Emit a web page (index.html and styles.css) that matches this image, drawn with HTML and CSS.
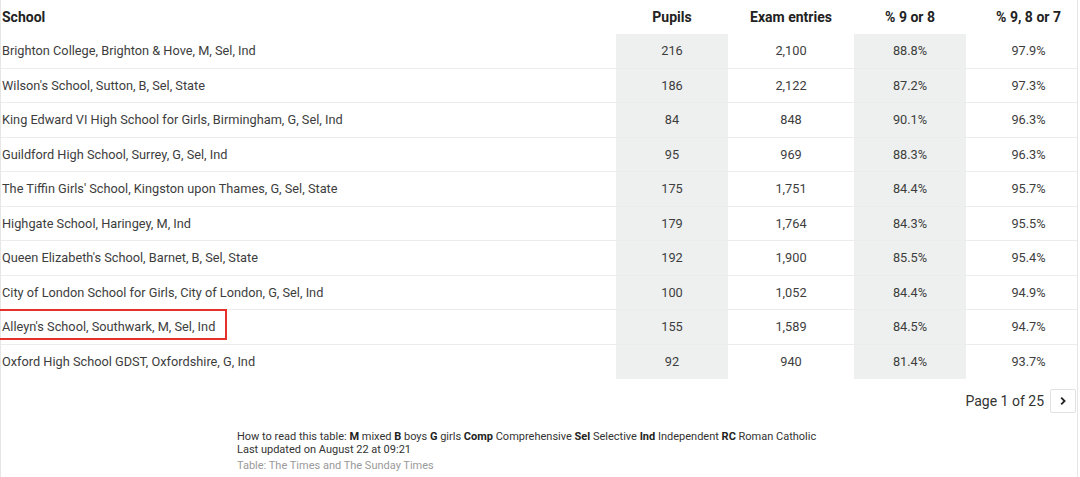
FILE: index.html
```html
<!DOCTYPE html>
<html lang="en">
<head>
<meta charset="utf-8">
<title>School rankings</title>
<link rel="stylesheet" href="styles.css">
</head>
<body>
<div class="wrap">
  <div class="table">
    <div class="row head">
      <div class="cell name">School</div>
      <div class="cell num">Pupils</div>
      <div class="cell num">Exam entries</div>
      <div class="cell num">% 9 or 8</div>
      <div class="cell num last">% 9, 8 or 7</div>
    </div>
    <div class="row">
      <div class="cell name">Brighton College, Brighton &amp; Hove, M, Sel, Ind</div>
      <div class="cell num shade">216</div>
      <div class="cell num">2,100</div>
      <div class="cell num shade">88.8%</div>
      <div class="cell num last">97.9%</div>
    </div>
    <div class="row">
      <div class="cell name">Wilson's School, Sutton, B, Sel, State</div>
      <div class="cell num shade">186</div>
      <div class="cell num">2,122</div>
      <div class="cell num shade">87.2%</div>
      <div class="cell num last">97.3%</div>
    </div>
    <div class="row">
      <div class="cell name">King Edward VI High School for Girls, Birmingham, G, Sel, Ind</div>
      <div class="cell num shade">84</div>
      <div class="cell num">848</div>
      <div class="cell num shade">90.1%</div>
      <div class="cell num last">96.3%</div>
    </div>
    <div class="row">
      <div class="cell name">Guildford High School, Surrey, G, Sel, Ind</div>
      <div class="cell num shade">95</div>
      <div class="cell num">969</div>
      <div class="cell num shade">88.3%</div>
      <div class="cell num last">96.3%</div>
    </div>
    <div class="row">
      <div class="cell name">The Tiffin Girls' School, Kingston upon Thames, G, Sel, State</div>
      <div class="cell num shade">175</div>
      <div class="cell num">1,751</div>
      <div class="cell num shade">84.4%</div>
      <div class="cell num last">95.7%</div>
    </div>
    <div class="row">
      <div class="cell name">Highgate School, Haringey, M, Ind</div>
      <div class="cell num shade">179</div>
      <div class="cell num">1,764</div>
      <div class="cell num shade">84.3%</div>
      <div class="cell num last">95.5%</div>
    </div>
    <div class="row">
      <div class="cell name">Queen Elizabeth's School, Barnet, B, Sel, State</div>
      <div class="cell num shade">192</div>
      <div class="cell num">1,900</div>
      <div class="cell num shade">85.5%</div>
      <div class="cell num last">95.4%</div>
    </div>
    <div class="row">
      <div class="cell name">City of London School for Girls, City of London, G, Sel, Ind</div>
      <div class="cell num shade">100</div>
      <div class="cell num">1,052</div>
      <div class="cell num shade">84.4%</div>
      <div class="cell num last">94.9%</div>
    </div>
    <div class="row">
      <div class="cell name marked">Alleyn's School, Southwark, M, Sel, Ind<span class="highlight"></span></div>
      <div class="cell num shade">155</div>
      <div class="cell num">1,589</div>
      <div class="cell num shade">84.5%</div>
      <div class="cell num last">94.7%</div>
    </div>
    <div class="row final">
      <div class="cell name">Oxford High School GDST, Oxfordshire, G, Ind</div>
      <div class="cell num shade">92</div>
      <div class="cell num">940</div>
      <div class="cell num shade">81.4%</div>
      <div class="cell num last">93.7%</div>
    </div>
  </div>
  <div class="pager">
    <span class="page-label">Page 1 of 25</span>
    <button class="next" type="button" aria-label="Next page">
      <svg width="10" height="10" viewBox="0 0 10 10"><path d="M3.2 1.6 L6.6 5 L3.2 8.4" fill="none" stroke="#222" stroke-width="1.8"/></svg>
    </button>
  </div>
  <div class="notes">
    <p class="key">How to read this table: <b>M</b> mixed <b>B</b> boys <b>G</b> girls <b>Comp</b> Comprehensive <b>Sel</b> Selective <b>Ind</b> Independent <b>RC</b> Roman Catholic</p>
    <p class="key">Last updated on August 22 at 09:21</p>
    <p class="source">Table: The Times and The Sunday Times</p>
  </div>
</div>
</body>
</html>
```

FILE: styles.css
```css
html, body {
  margin: 0;
  padding: 0;
  background: #ffffff;
}

body {
  font-family: Roboto, "Liberation Sans", Arial, sans-serif;
  color: #3d3d3d;
  font-size: 12.75px;
}

.wrap {
  width: 1078px;
  height: 477px;
  border-left: 1px solid #e6e6e6;
  border-right: 1px solid #e6e6e6;
  box-sizing: border-box;
}

.table {
  display: flex;
  flex-direction: column;
}

.row {
  display: grid;
  grid-template-columns: 615px 112px 126px 112px 1fr;
  height: 34.5px;
  box-sizing: border-box;
  border-bottom: 1px solid #ececec;
}

.row.head {
  height: 34px;
  border-bottom: none;
  font-weight: 700;
  font-size: 14px;
  color: #222222;
}

.row.final {
  border-bottom: none;
}

.cell {
  display: flex;
  align-items: center;
  white-space: nowrap;
}

.cell.name {
  padding-left: 1px;
}

.cell.num {
  justify-content: center;
}

.cell.last {
  padding-left: 14px;
}

.cell.shade {
  background: #edf0ef;
}

.marked {
  position: relative;
}

.highlight {
  position: absolute;
  left: -3px;
  top: -1px;
  width: 229px;
  height: 31px;
  border: 2px solid #e8302a;
  box-sizing: border-box;
}

.pager {
  display: flex;
  justify-content: flex-end;
  align-items: center;
  gap: 6px;
  margin-top: 10px;
  padding-right: 1px;
}

.page-label {
  font-size: 14px;
  color: #333333;
}

.next {
  width: 26px;
  height: 24px;
  border: 1px solid #e2e2e2;
  border-radius: 2px;
  background: #ffffff;
  padding: 0;
  display: flex;
  align-items: center;
  justify-content: center;
}

.notes {
  padding-left: 236px;
  margin-top: 17px;
  font-size: 11px;
  color: #333333;
}

.notes p {
  margin: 0;
  line-height: 13px;
}

.notes b {
  font-weight: 700;
  color: #222222;
}

.notes .source {
  margin-top: 3px;
  color: #9a9a9a;
}
```
